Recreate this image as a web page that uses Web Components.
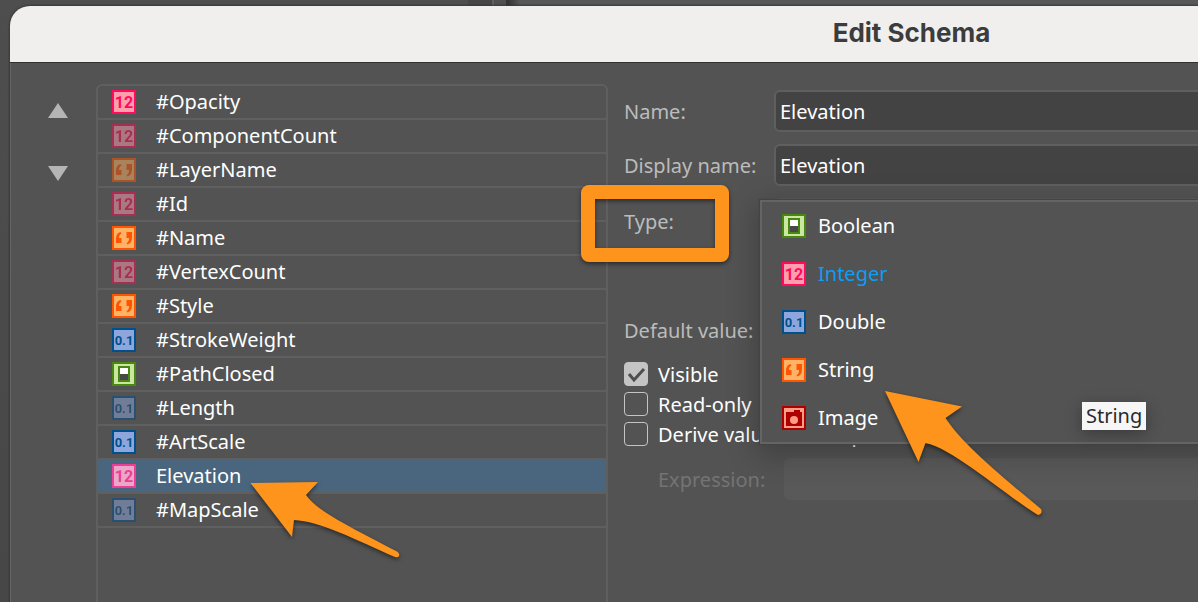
<!DOCTYPE html>
<html lang="en">
<head>
<meta charset="utf-8">
<title>Edit Schema</title>
<style>
    :root {
        --panel: #535353;
        --line: #5f5f5f;
        --field: #434343;
        --label: #bcbcbc;
        --accent: #ff941c;
    }

    html, body {
        height: 100%;
    }

    body {
        margin: 0;
        overflow: hidden;
        background: #4a4a4a;
        color: #fff;
        font: 20px/24px "Noto Sans", "Open Sans", sans-serif;
    }
</style>
</head>
<body>
<schema-dialog heading="Edit Schema">
    <move-buttons slot="tools"></move-buttons>
    <field-list slot="list">
        <field-item type="integer">#Opacity</field-item>
        <field-item type="integer" dim>#ComponentCount</field-item>
        <field-item type="string" dim>#LayerName</field-item>
        <field-item type="integer" dim>#Id</field-item>
        <field-item type="string">#Name</field-item>
        <field-item type="integer" dim>#VertexCount</field-item>
        <field-item type="string">#Style</field-item>
        <field-item type="double">#StrokeWeight</field-item>
        <field-item type="boolean">#PathClosed</field-item>
        <field-item type="double" dim>#Length</field-item>
        <field-item type="double">#ArtScale</field-item>
        <field-item type="integer" selected>Elevation</field-item>
        <field-item type="double" dim>#MapScale</field-item>
    </field-list>
    <schema-form></schema-form>
</schema-dialog>
<annotation-layer></annotation-layer>

<script>
function attach(host, html) {
    const template = document.createElement('template');
    template.innerHTML = html;
    host.attachShadow({ mode: 'open' }).appendChild(template.content.cloneNode(true));
}

const quotes = `
    <path d="M8.500 6C5 7 4 10 4 13v4h5.500v-5H7C7 10 8 8 9.500 7.500Z"/>
    <path d="M14.500 6H20v5c0 4-1.500 6.500-4.500 7.500l-1-1.500c2-1 2.500-2.500 2.500-5h-2.500Z"/>`;

const icons = {
    integer: {
        edge: '#ff0a5c', fill: '#ff9fad',
        art: '<text x="12" y="18" text-anchor="middle" font-size="16">12</text>'
    },
    string: { edge: '#ff5400', fill: '#ffb366', art: quotes },
    double: {
        edge: '#00508c', fill: '#8ea6dc',
        art: '<text x="12" y="17" text-anchor="middle" font-size="13">0.1</text>'
    },
    boolean: {
        edge: '#488710', fill: '#cbe6a0',
        art: '<path d="M6 4h12v16H6z"/><path fill="#fff" d="M8 6h8v6H8z"/><path fill="#484848" d="M8 12h8v6H8z"/>'
    },
    image: {
        edge: '#ae0000', fill: '#ff9d85',
        art: '<path d="M4 6h8V4h6v2h2v14H4z"/><circle cx="12" cy="14" r="4" fill="#ff9d85"/>'
    }
};

class TypeIcon extends HTMLElement {
    connectedCallback() {
        const icon = icons[this.getAttribute('type')];
        attach(this, `
            <style>
                :host { display: block; flex: none; width: 24px; height: 24px; }
                :host([dim]) { opacity: 0.5; }
                svg { display: block; fill: ${icon.edge}; font-family: Roboto, sans-serif; font-weight: 700; }
                .fill { fill: ${icon.fill}; }
                :host([selected]) svg { fill: #ee3d96; }
                :host([selected]) .fill { fill: #eaa7c8; }
            </style>
            <svg width="24" height="24" viewBox="0 0 24 24" aria-hidden="true">
                <path d="M0 0h24v24H0z"/>
                <path class="fill" d="M2 2h20v20H2z"/>
                ${icon.art}
            </svg>`);
    }
}

class FieldItem extends HTMLElement {
    connectedCallback() {
        const state = ['dim', 'selected'].filter((name) => this.hasAttribute(name)).join(' ');
        attach(this, `
            <style>
                :host { display: block; border-bottom: 2px solid var(--line); }
                button {
                    display: flex;
                    align-items: center;
                    gap: 20px;
                    width: 100%;
                    height: 32px;
                    padding: 0 14px;
                    border: 0;
                    background: none;
                    color: inherit;
                    font: inherit;
                }
                :host([selected]) button { background: #4a667e; }
            </style>
            <button type="button"><type-icon type="${this.getAttribute('type')}" ${state}></type-icon><slot></slot></button>`);
    }
}

class FieldList extends HTMLElement {
    connectedCallback() {
        attach(this, `
            <style>
                :host {
                    display: block;
                    flex: none;
                    box-sizing: border-box;
                    width: 512px;
                    border: 2px solid var(--line);
                    border-radius: 6px;
                }
            </style>
            <slot></slot>`);
    }
}

class MoveButtons extends HTMLElement {
    connectedCallback() {
        attach(this, `
            <style>
                :host { display: flex; flex-direction: column; gap: 48px; padding-top: 19px; }
                button { display: block; width: 20px; height: 15px; padding: 0; border: 0; background: none; }
                svg { display: block; fill: #b5b5b5; }
            </style>
            <button type="button" aria-label="Move up">
                <svg width="20" height="15"><path d="M10 0l10 15H0z"/></svg>
            </button>
            <button type="button" aria-label="Move down">
                <svg width="20" height="15"><path d="M0 0h20L10 15z"/></svg>
            </button>`);
    }
}

class TextRow extends HTMLElement {
    connectedCallback() {
        const off = this.hasAttribute('disabled') ? 'disabled' : '';
        attach(this, `
            <style>
                :host { display: flex; align-items: center; height: 42px; }
                label { flex: none; width: var(--label-width, 150px); padding-top: 2px; color: var(--label); }
                input {
                    flex: 1;
                    min-width: 0;
                    height: 100%;
                    box-sizing: border-box;
                    padding: 0 4px;
                    border: 2px solid var(--line);
                    border-radius: 6px;
                    background: var(--field);
                    color: inherit;
                    font: inherit;
                }
                :host([disabled]) label { color: #747474; }
                :host([disabled]) input { background: #595959; border-color: #595959; }
            </style>
            <label for="box">${this.getAttribute('label')}</label>
            <input id="box" type="text" value="${this.getAttribute('value') || ''}" ${off}>`);
    }
}

class CheckRow extends HTMLElement {
    connectedCallback() {
        attach(this, `
            <style>
                :host { display: block; }
                label { display: flex; align-items: center; gap: 10px; height: 30px; white-space: nowrap; }
                .box { display: grid; flex: none; width: 24px; height: 24px; }
                .text { padding-top: 2px; }
                input, svg { grid-area: 1 / 1; }
                input {
                    appearance: none;
                    box-sizing: border-box;
                    width: 24px;
                    height: 24px;
                    margin: 0;
                    border: 1px solid #c4c4c4;
                    border-radius: 4px;
                }
                input:checked { background: #c4c4c4; }
                svg { fill: none; stroke: #4f4f4f; stroke-width: 3; pointer-events: none; }
                input:not(:checked) + svg { display: none; }
            </style>
            <label>
                <span class="box">
                    <input type="checkbox" ${this.hasAttribute('checked') ? 'checked' : ''}>
                    <svg width="24" height="24"><path d="M5 12l5 6L20 7"/></svg>
                </span>
                <span class="text"><slot></slot></span>
            </label>`);
    }
}

class TypeOption extends HTMLElement {
    connectedCallback() {
        attach(this, `
            <style>
                :host { display: block; }
                button {
                    display: flex;
                    align-items: center;
                    gap: 12px;
                    width: 100%;
                    height: 48px;
                    padding: 0 20px;
                    border: 0;
                    background: none;
                    color: inherit;
                    font: inherit;
                }
                :host([current]) { color: #0d9df5; }
            </style>
            <button type="button"><type-icon type="${this.getAttribute('type')}"></type-icon><slot></slot></button>`);
    }
}

class TypeMenu extends HTMLElement {
    connectedCallback() {
        attach(this, `
            <style>
                :host {
                    display: block;
                    border: 2px solid #646464;
                    background: var(--panel);
                    box-shadow: 0 0 1px 1px #444, 0 8px 28px 4px rgb(0 0 0 / 0.22);
                }
                .tip {
                    position: absolute;
                    left: 320px;
                    top: 200px;
                    padding: 2px 4px;
                    background: #f6f6f6;
                    color: #2a2a2a;
                    box-shadow: 0 4px 16px rgb(0 0 0 / 0.3);
                }
            </style>
            <type-option type="boolean">Boolean</type-option>
            <type-option type="integer" current>Integer</type-option>
            <type-option type="double">Double</type-option>
            <type-option type="string">String</type-option>
            <type-option type="image">Image</type-option>
            <span class="tip" role="tooltip">String</span>`);
    }
}

class SchemaForm extends HTMLElement {
    connectedCallback() {
        attach(this, `
            <style>
                :host { display: block; flex: 1; min-width: 0; padding-top: 6px; }
                text-row { margin-bottom: 12px; }
                .type { position: relative; display: flex; align-items: center; height: 48px; margin-bottom: 63px; }
                .type label { flex: none; width: 150px; color: var(--label); }
                select {
                    flex: 1;
                    height: 100%;
                    border: 2px solid var(--line);
                    border-radius: 6px;
                    background: var(--panel);
                    color: inherit;
                    font: inherit;
                }
                type-menu { position: absolute; z-index: 1; left: 136px; right: 0; top: 2px; }
                .default { margin-bottom: 8px; }
                .expression { --label-width: 126px; margin: 9px 0 0 34px; }
            </style>
            <text-row label="Name:" value="Elevation"></text-row>
            <text-row label="Display name:" value="Elevation"></text-row>
            <div class="type">
                <label for="type">Type:</label>
                <select id="type"><option>Integer</option></select>
                <type-menu></type-menu>
            </div>
            <text-row class="default" label="Default value:" value="0"></text-row>
            <check-row checked>Visible</check-row>
            <check-row>Read-only</check-row>
            <check-row>Derive value from expression</check-row>
            <text-row class="expression" label="Expression:" disabled></text-row>`);
    }
}

class SchemaDialog extends HTMLElement {
    connectedCallback() {
        attach(this, `
            <style>
                :host { display: flex; height: 100%; overflow: hidden; }
                .backdrop {
                    flex: 1;
                    min-width: 0;
                    padding: 6px 0 0 10px;
                    background:
                        linear-gradient(90deg, #4e4e4e 468px, #464646 468px 492px, #606060 492px 494px,
                            #505050 494px 506px, #343434 506px 508px, #585858 520px) 0 0 / 100% 6px no-repeat,
                        linear-gradient(#4e4e4e, #474747);
                }
                /* wider and taller than the window: the rest of the dialog is off screen */
                section {
                    display: flex;
                    flex-direction: column;
                    width: calc(150vw + 6px);
                    height: 110%;
                    border-radius: 20px 20px 0 0;
                    background: var(--panel);
                    box-shadow: 0 0 2px 1px #383838;
                }
                header {
                    height: 56px;
                    border-bottom: 1px solid #303030;
                    border-radius: 20px 20px 0 0;
                    background: #f0efed;
                }
                h1 {
                    margin: 0;
                    color: #3c3c3c;
                    font: 700 26px/54px Inter, "Open Sans", sans-serif;
                    text-align: center;
                }
                .body { display: flex; flex: 1; padding: 21px 0 0 37px; border-left: 1px solid #666; }
                .list { display: flex; margin: 0 16px 0 28px; }
            </style>
            <div class="backdrop">
                <section role="dialog" aria-labelledby="heading">
                    <header><h1 id="heading">${this.getAttribute('heading')}</h1></header>
                    <div class="body">
                        <slot name="tools"></slot>
                        <div class="list"><slot name="list"></slot></div>
                        <slot></slot>
                    </div>
                </section>
            </div>`);
    }
}

class AnnotationLayer extends HTMLElement {
    connectedCallback() {
        attach(this, `
            <style>
                :host { position: absolute; inset: 0; z-index: 2; overflow: hidden; pointer-events: none; }
                svg { display: block; width: 100%; height: 100%; fill: var(--accent); filter: drop-shadow(0 2px 2px rgb(0 0 0 / 0.5)); }
            </style>
            <svg aria-hidden="true">
                <rect x="588" y="192" width="134" height="63" rx="1" fill="none" stroke="var(--accent)" stroke-width="14" stroke-linejoin="round"/>
                <path d="M250.500 483L318 482L306 495C318 512 354 529 397 551.500Q400 553.500 399 556Q398 558 395 557C354 539 320 521 294 520L292 537Z"/>
                <path d="M885 391L962 406.500L945.500 418C960 441 996 472 1041 509Q1043 514 1038 515C1004 494 954 449 925.500 443L918.500 462Z"/>
            </svg>`);
    }
}

customElements.define('type-icon', TypeIcon);
customElements.define('field-item', FieldItem);
customElements.define('field-list', FieldList);
customElements.define('move-buttons', MoveButtons);
customElements.define('text-row', TextRow);
customElements.define('check-row', CheckRow);
customElements.define('type-option', TypeOption);
customElements.define('type-menu', TypeMenu);
customElements.define('schema-form', SchemaForm);
customElements.define('schema-dialog', SchemaDialog);
customElements.define('annotation-layer', AnnotationLayer);
</script>
</body>
</html>
